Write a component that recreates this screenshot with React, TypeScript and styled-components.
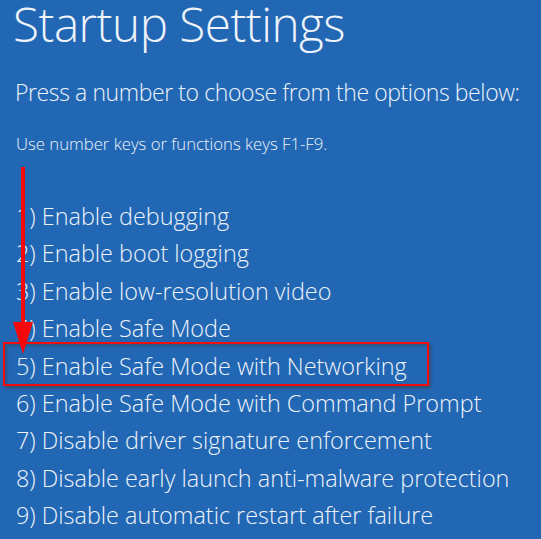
import React, { FC } from "react"
import styled, { createGlobalStyle } from "styled-components"

const GlobalStyle = createGlobalStyle`
  html, body {
    margin: 0;
    padding: 0;
    background: #2267b4;
  }
`

const Screen = styled.div`
  position: relative;
  width: 541px;
  height: 539px;
  overflow: hidden;
  background: #2267b4;
  color: #eef3fa;
  font-family: "Open Sans", "Noto Sans", sans-serif;
  font-weight: 300;
  padding-left: 13px;
  box-sizing: border-box;
`

const Title = styled.h1`
  margin: 0;
  font-size: 47.6px;
  font-weight: 300;
  line-height: 50px;
  margin-top: -1px;
  letter-spacing: -0.5px;
  white-space: nowrap;
`

const Prompt = styled.div`
  margin: 28px 0 0 2px;
  font-size: 23px;
  line-height: 30px;
  letter-spacing: -0.4px;
  white-space: nowrap;
`

const Hint = styled.div`
  margin: 27px 0 0 3px;
  font-size: 16.7px;
  line-height: 20px;
  white-space: nowrap;
`

const Options = styled.ol`
  list-style: none;
  margin: 44px 0 0 3px;
  padding: 0;
`

const Option = styled.li<{ $highlight?: boolean }>`
  position: relative;
  font-size: 23.4px;
  line-height: 37.4px;
  height: 37.4px;
  white-space: nowrap;

  ${({ $highlight }) =>
    $highlight &&
    `
    &::before {
      content: "";
      position: absolute;
      left: -13px;
      top: -6px;
      width: 422px;
      height: 40px;
      border: 2px solid #f20d0d;
      box-shadow: 2px 2px 3px rgba(60, 60, 60, 0.55), inset 2px 2px 3px rgba(60, 60, 60, 0.4);
    }
  `}
`

const Arrow = styled.svg`
  position: absolute;
  left: 12px;
  top: 167px;
`

const options = [
  "1) Enable debugging",
  "2) Enable boot logging",
  "3) Enable low-resolution video",
  "4) Enable Safe Mode",
  "5) Enable Safe Mode with Networking",
  "6) Enable Safe Mode with Command Prompt",
  "7) Disable driver signature enforcement",
  "8) Disable early launch anti-malware protection",
  "9) Disable automatic restart after failure",
]

const App: FC = () => {
  return (
    <>
      <GlobalStyle />
      <Screen>
        <Title>Startup Settings</Title>
        <Prompt>Press a number to choose from the options below:</Prompt>
        <Hint>Use number keys or functions keys F1-F9.</Hint>
        <Options>
          {options.map((o, i) => (
            <Option key={o} $highlight={i === 4}>
              {o}
            </Option>
          ))}
        </Options>
        <Arrow width="22" height="190" viewBox="0 0 22 190">
          <rect x="9" y="0" width="4" height="160" fill="#f5080a" />
          <polygon points="1,155 21,155 11,187" fill="#f5080a" />
        </Arrow>
      </Screen>
    </>
  )
}

export default App
